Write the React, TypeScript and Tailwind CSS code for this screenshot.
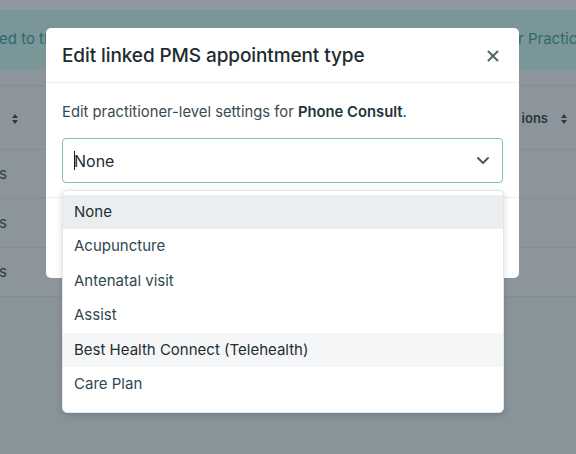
import React from "react";

function SortIcon() {
  return (
    <svg width="8" height="12" viewBox="0 0 8 12" className="text-[#2c3a3f]">
      <path d="M4 1 L7 5 H1 Z" fill="currentColor" />
      <path d="M4 11 L7 7 H1 Z" fill="currentColor" />
    </svg>
  );
}

const items = [
  "None",
  "Acupuncture",
  "Antenatal visit",
  "Assist",
  "Best Health Connect (Telehealth)",
  "Care Plan",
  "Cerebral assessment",
];

export default function App() {
  return (
    <div
      className="relative w-[576px] h-[454px] overflow-hidden bg-[#89939a]"
      style={{ fontFamily: "Inter, 'Noto Sans', sans-serif" }}
    >
      {/* Background page (dimmed) */}
      <div className="flex flex-col">
        <div className="h-[10px] bg-[#8f989f]" />
        <div className="h-[60px] bg-[#7b9698] flex items-center justify-between text-[15px] text-[#2d6a6d]">
          <span className="-ml-[1px] -mt-[2px]">ed to the</span>
          <span className="-mr-[10px] -mt-[2px]">r Practice</span>
        </div>
        <div className="h-[16px] bg-[#8c959c] border-b border-[#848d94]" />
        <div className="h-[64px] bg-[#8c959c] border-b border-[#848d94] flex items-center justify-between text-[13px] font-semibold text-[#28363b]">
          <span className="pl-[11px] pt-[2px]"><SortIcon /></span>
          <span className="flex items-center gap-[13px] pr-[8px] pt-[2px]">
            <span className="-mr-[1px]">ions</span>
            <SortIcon />
          </span>
        </div>
        {[0, 1, 2].map((i) => (
          <div
            key={i}
            className="h-[49px] bg-[#8c959c] border-b border-[#848d94] flex items-center text-[15px] text-[#2a3f47]"
          >
            <span className="-ml-[1px]">s</span>
          </div>
        ))}
      </div>

      {/* Modal */}
      <div className="absolute left-[46px] top-[28px] w-[473px] h-[250px] bg-white rounded-[5px] flex flex-col">
        <div className="h-[55px] border-b border-[#eceeef] flex items-center justify-between pl-[16px] pr-[20px]">
          <h2 className="text-[19px] font-medium text-[#1e2c2f] tracking-[-0.1px] pt-[3px]">
            Edit linked PMS appointment type
          </h2>
          <svg width="12" height="12" viewBox="0 0 12 12" className="mt-[1px]">
            <path d="M1.5 1.5 L10.5 10.5 M10.5 1.5 L1.5 10.5" stroke="#53636a" strokeWidth="2" strokeLinecap="round" />
          </svg>
        </div>
        <div className="px-[16px] pt-[19px] flex flex-col">
          <p className="text-[14.8px] text-[#3a4a52] leading-[20px]">
            Edit practitioner-level settings for{" "}
            <span className="font-semibold text-[#22333a]">Phone Consult</span>.
          </p>
          <div className="mt-[16px] h-[45px] border border-[#7ec0c2] rounded-[4px] flex items-center justify-between pl-[11px] pr-[12px]">
            <span className="flex items-center text-[16px] text-[#1f2d30]">
              <span className="w-[1px] h-[19px] bg-[#1b1b1b] mr-[-1px]" />
              None
            </span>
            <svg width="14" height="9" viewBox="0 0 14 9">
              <path d="M2 2 L7 7 L12 2" stroke="#4e5a5f" strokeWidth="2" fill="none" strokeLinecap="round" strokeLinejoin="round" />
            </svg>
          </div>
        </div>
        <div className="mt-[14px] border-t border-[#eceeef]" />
      </div>

      {/* Dropdown */}
      <div className="absolute left-[62px] top-[190px] w-[442px] h-[223px] bg-white rounded-[5px] border border-[#e3e6e8] shadow-[0_2px_6px_rgba(0,0,0,0.15)] overflow-hidden pt-[4px]">
        {items.map((it, i) => (
          <div
            key={it}
            className={
              "h-[34.4px] flex items-center pl-[11px] text-[15px] " +
              (i === 0
                ? "bg-[#ebeef1] text-[#1f2d30]"
                : i === 4
                ? "bg-[#f5f6f8] text-[#1f2d30]"
                : "text-[#2f4852]")
            }
          >
            {it}
          </div>
        ))}
      </div>
    </div>
  );
}
